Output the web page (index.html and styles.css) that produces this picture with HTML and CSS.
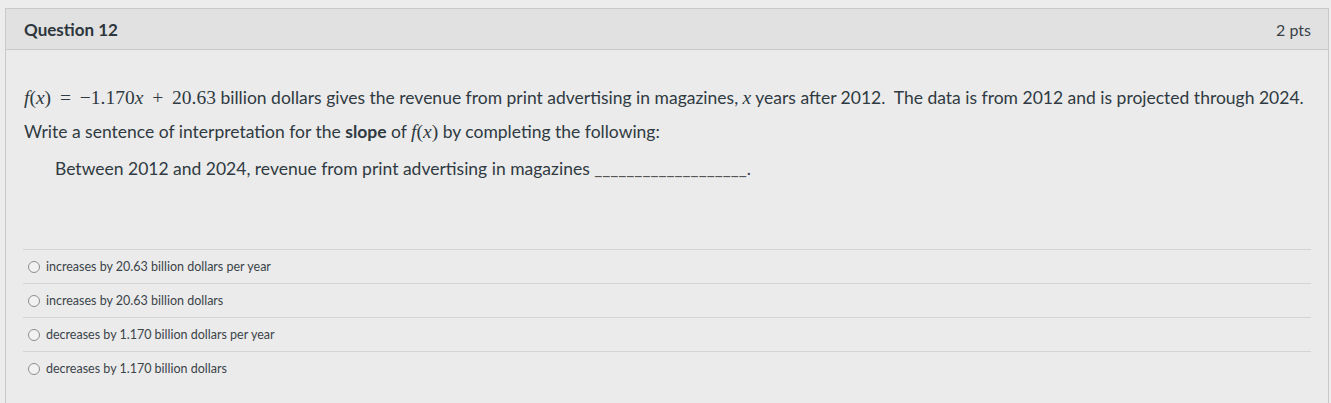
FILE: index.html
```html
<!DOCTYPE html>
<html>
<head>
<meta charset="utf-8">
<link rel="stylesheet" href="styles.css">
</head>
<body>
<div class="page">
  <div class="question">
    <div class="q-header">
      <span class="q-title">Question 12</span>
      <span class="q-pts">2 pts</span>
    </div>
    <div class="q-body">
      <p class="line"><span class="math"><i>f</i>(<i>x</i>) <span class="op">=</span> −1.170<i>x</i> <span class="op">+</span> 20.63</span> billion dollars gives the revenue from print advertising in magazines, <span class="math"><i>x</i></span> years after 2012.&nbsp; The data is from 2012 and is projected through 2024.</p>
      <p class="line">Write a sentence of interpretation for the <strong>slope</strong> of <span class="math"><i>f</i>(<i>x</i>)</span> by completing the following:</p>
      <p class="line indent">Between 2012 and 2024, revenue from print advertising in magazines <span class="blank">___________________</span>.</p>
    </div>
    <div class="answers">
      <label class="answer"><span class="radio"></span><span class="a-text">increases by 20.63 billion dollars per year</span></label>
      <label class="answer"><span class="radio"></span><span class="a-text">increases by 20.63 billion dollars</span></label>
      <label class="answer"><span class="radio"></span><span class="a-text">decreases by 1.170 billion dollars per year</span></label>
      <label class="answer"><span class="radio"></span><span class="a-text">decreases by 1.170 billion dollars</span></label>
    </div>
  </div>
</div>
</body>
</html>
```

FILE: styles.css
```css
html, body {
  margin: 0;
  padding: 0;
  background: #ececec;
  font-family: Lato, "Liberation Sans", sans-serif;
  color: #2f3a42;
}
.page {
  padding: 8px 2px 0 5px;
  height: 395px;
  overflow: hidden;
}
.question {
  border: 1px solid #c9c9c9;
  border-bottom: none;
  background: #ebebeb;
  height: 400px;
}
.q-header {
  display: flex;
  justify-content: space-between;
  align-items: center;
  height: 40px;
  padding: 0 17px 0 18px;
  background: #e1e1e1;
  border-bottom: 1px solid #c9c9c9;
}
.q-title {
  font-weight: 700;
  font-size: 17px;
  color: #2d363d;
}
.q-pts {
  font-size: 16px;
  color: #3a4248;
}
.q-body {
  padding: 38px 17px 0 18px;
}
.line {
  margin: 0 0 14px 0;
  font-size: 17.5px;
  line-height: 20px;
  white-space: nowrap;
}
.line.indent {
  padding-left: 31px;
  margin-top: 17px;
}
.math {
  font-family: "Liberation Serif", "DejaVu Serif", serif;
  font-size: 19.5px;
}
.math .op {
  padding: 0 4px;
}
strong {
  font-weight: 700;
}
.blank {
  color: #555;
}
.answers {
  margin: 70px 17px 0 17px;
}
.answer {
  display: flex;
  align-items: center;
  gap: 6px;
  height: 33px;
  border-top: 1px solid #d4d4d4;
  padding-left: 5px;
  font-size: 12.5px;
  color: #3b4449;
}
.radio {
  width: 12px;
  height: 12px;
  border: 1px solid #8e8e8e;
  border-radius: 50%;
  background: #f2f2f2;
  box-sizing: border-box;
  display: inline-block;
}
```
